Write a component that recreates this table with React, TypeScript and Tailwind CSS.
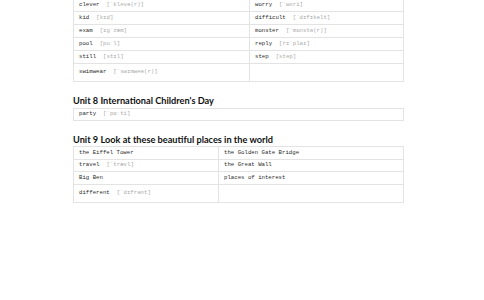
import React from "react";

type Word = { w: string; p?: string };

const unit7: [Word, Word | null][] = [
  [{ w: "clever", p: "[ˈklevə(r)]" }, { w: "worry", p: "[ˈwʌri]" }],
  [{ w: "kid", p: "[kɪd]" }, { w: "difficult", p: "[ˈdɪfɪkəlt]" }],
  [{ w: "exam", p: "[ɪɡˈzæm]" }, { w: "monster", p: "[ˈmɒnstə(r)]" }],
  [{ w: "pool", p: "[puːl]" }, { w: "reply", p: "[rɪˈplaɪ]" }],
  [{ w: "still", p: "[stɪl]" }, { w: "step", p: "[step]" }],
];

const unit9: [Word, Word | null, string][] = [
  [{ w: "the Eiffel Tower" }, { w: "the Golden Gate Bridge" }, "h-[13px]"],
  [{ w: "travel", p: "[ˈtrævl]" }, { w: "the Great Wall" }, "h-[12px]"],
  [{ w: "Big Ben" }, { w: "places of interest" }, "h-[13px]"],
];

const mono = "font-['Liberation_Mono',monospace] text-[5.7px] text-[#2a2a2a]";

function Cell({ item, className = "" }: { item: Word | null; className?: string }) {
  return (
    <div className={`flex items-center px-[5px] ${className}`}>
      {item && (
        <span className={mono}>
          {item.w}
          {item.p && <span className="ml-[7px] text-[#aaa]">{item.p}</span>}
        </span>
      )}
    </div>
  );
}

function Heading({ children }: { children: React.ReactNode }) {
  return (
    <h2 className="font-['Lato',sans-serif] text-[9.2px] font-bold leading-[12px] text-[#111]">
      {children}
    </h2>
  );
}

export default function App() {
  return (
    <div className="h-[300px] w-[484px] overflow-hidden bg-white">
      <div className="ml-[73px] w-[331px]">
        {/* unit 7 words */}
        <div className="-mt-[2px] border border-[#e3e3e3]">
          {unit7.map(([a, b], i) => (
            <div key={i} className="grid h-[13px] grid-cols-[176px_1fr] border-b border-[#e3e3e3]">
              <Cell item={a} className="border-r border-[#e3e3e3]" />
              <Cell item={b} />
            </div>
          ))}
          <div className="grid h-[17px] grid-cols-[176px_1fr]">
            <Cell item={{ w: "swimwear", p: "[ˈswɪmweə(r)]" }} className="border-r border-[#e3e3e3]" />
            <Cell item={null} />
          </div>
        </div>

        <div className="mt-[13px]">
          <Heading>Unit 8 International Children's Day</Heading>
        </div>
        <div className="mt-[1px] flex h-[13px] items-center border border-[#e3e3e3] px-[5px]">
          <span className={mono}>
            party<span className="ml-[7px] text-[#aaa]">[ˈpɑːti]</span>
          </span>
        </div>

        <div className="mt-[13px]">
          <Heading>Unit 9 Look at these beautiful places in the world</Heading>
        </div>
        <div className="border border-[#e3e3e3]">
          {unit9.map(([a, b, h], i) => (
            <div key={i} className={`grid grid-cols-[145px_1fr] border-b border-[#e3e3e3] ${h}`}>
              <Cell item={a} className="border-r border-[#e3e3e3]" />
              <Cell item={b} />
            </div>
          ))}
          <div className="grid h-[17px] grid-cols-[145px_1fr]">
            <Cell item={{ w: "different", p: "[ˈdɪfrənt]" }} className="border-r border-[#e3e3e3]" />
            <Cell item={null} />
          </div>
        </div>
      </div>
    </div>
  );
}
